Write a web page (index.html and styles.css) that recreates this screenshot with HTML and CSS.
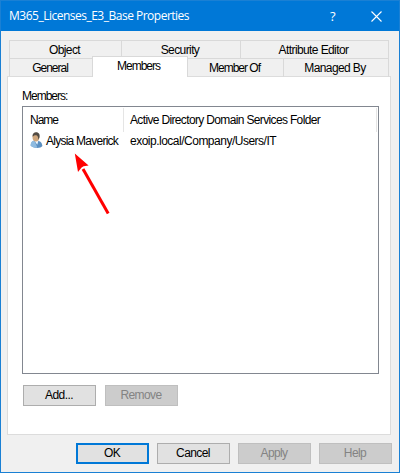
FILE: index.html
```html
<!DOCTYPE html>
<html lang="en">
<head>
  <meta charset="UTF-8">
  <meta name="viewport" content="width=device-width, initial-scale=1.0">
  <title>M365_Licenses_E3_Base Properties</title>
  <link rel="stylesheet" href="styles.css">
</head>
<body>
  <div class="window">
    <header class="titlebar">
      <h1>M365_Licenses_E3_Base Properties</h1>
      <span class="help">?</span>
      <svg class="close" width="11" height="11" viewBox="0 0 11 11">
        <path d="M0.5 0.5L10.5 10.5M10.5 0.5L0.5 10.5" stroke="#fff" stroke-width="1.1" fill="none"/>
      </svg>
    </header>

    <main class="content">
      <nav class="tabs tabs-back">
        <a class="tab">Object</a>
        <a class="tab">Security</a>
        <a class="tab">Attribute Editor</a>
      </nav>
      <nav class="tabs tabs-front">
        <a class="tab tight">General</a>
        <a class="tab active tight">Members</a>
        <a class="tab tight">Member Of</a>
        <a class="tab">Managed By</a>
      </nav>

      <section class="panel">
        <div class="label tight">Members:</div>
        <div class="list">
          <div class="list-head">
            <span class="col-name tight">Name</span>
            <span class="col-folder">Active Directory Domain Services Folder</span>
          </div>
          <div class="list-row">
            <span class="user">
              <svg width="14" height="17" viewBox="0 0 14 17">
                <path d="M0.6 13.4C0.8 10.2 2.6 8.6 5.6 8.6C9.6 8.6 12 10.4 12.4 14C10.8 16.6 3.2 16.6 0.6 13.4Z" fill="#5b8fc0"/>
                <path d="M0.6 13.4C0.8 10.4 2.2 8.8 4.4 8.6L7.4 15.8C4.4 16 1.8 15 0.6 13.4Z" fill="#8fbbe0"/>
                <path d="M4.4 8.6L7.2 12.8L8.4 8.8Z" fill="#eef6fc"/>
                <ellipse cx="5.9" cy="5.1" rx="3.4" ry="4.4" fill="#cfa67c"/>
                <path d="M2.6 4.8C2.2 1.8 4 0.3 6.1 0.3C9 0.3 10.2 2.6 9.4 5.8L8.3 7.8C8.4 5.4 7.7 3.7 6.3 3.3C4.9 3 3.5 3.5 2.6 4.8Z" fill="#514b43"/>
              </svg>
              <span class="user-name">Alysia Maverick</span>
            </span>
            <span class="path">exoip.local/Company/Users/IT</span>
          </div>
        </div>
        <div class="panel-buttons">
          <button class="btn">Add...</button>
          <button class="btn tight" disabled>Remove</button>
        </div>
      </section>

      <footer class="dialog-buttons">
        <button class="btn default">OK</button>
        <button class="btn">Cancel</button>
        <button class="btn" disabled>Apply</button>
        <button class="btn" disabled>Help</button>
      </footer>
    </main>

    <svg class="arrow" width="40" height="66" viewBox="0 0 40 66">
      <path d="M9 16L34.2 60.5" stroke="#f00" stroke-width="3"/>
      <path d="M0.8 0.4L14.6 12.6L9.6 13.2L7.6 14.4L4 19Z" fill="#f00"/>
    </svg>
  </div>
</body>
</html>
```
FILE: styles.css
```css
* {
  box-sizing: border-box;
}
body {
  margin: 0;
  font-family: "Liberation Sans", Arial, sans-serif;
  font-size: 12px;
  line-height: 14px;
  letter-spacing: -0.6px;
  white-space: nowrap;
  color: #000;
}
.window {
  position: relative;
  width: 400px; height: 473px;
  border: 1px solid #1a80d4;
  background: #f0f0f0;
}
.titlebar {
  display: flex;
  align-items: center;
  height: 30px;
  padding: 0 17px 0 8px;
  background: #0078d7;
  color: #fff;
}
.titlebar h1 {
  flex: 1;
  margin: 0;
  font-family: "Open Sans", "Noto Sans", sans-serif;
  font-size: 12px;
  font-weight: normal;
  letter-spacing: -0.5px;
}
.help {
  margin-right: 36px;
  font-family: "Open Sans", "Noto Sans", sans-serif;
  font-size: 13px;
}
.content {
  padding: 9px 7px 0 6px;
}
.tabs {
  display: grid;
  height: 18px;
  margin: 0 3px 0 2px;
  border-left: 1px solid #d9d9d9;
}
.tabs-back {
  grid-template-columns: 112px 119px 148px;
}
.tabs-front {
  grid-template-columns: 83px 95px 96px 105px;
}
.tab {
  padding: 2px 2px 0 0;
  border-top: 1px solid #d9d9d9;
  border-right: 1px solid #d9d9d9;
  text-align: center;
}
.tab.active {
  z-index: 1;
  height: 21px;
  margin: -2px 0 0 -1px;
  padding-right: 3px;
  border-left: 1px solid #d9d9d9;
  background: #fff;
}
.panel {
  width: 384px; height: 359px;
  padding: 12px 11px 0 14px;
  border: 1px solid #dcdcdc;
  background: #fff;
}
.list {
  width: 357px; height: 268px;
  margin-top: 3px;
  padding: 1px;
  border: 1px solid #828790;
}
.list-head {
  display: flex;
  height: 24px;
  line-height: 24px;
  border-right: 1px solid #e5e5e5;
}
.col-name {
  width: 100px;
  padding-left: 6px;
  border-right: 1px solid #e5e5e5;
}
.col-folder {
  padding-left: 6px;
  letter-spacing: -0.65px;
}
.list-row {
  display: flex;
  align-items: center;
  height: 17px;
}
.user {
  display: flex;
  align-items: center;
  gap: 2px;
  width: 106px;
  padding-left: 6px;
}
.user-name {
  letter-spacing: -0.75px;
}
.path {
  letter-spacing: -0.5px;
}
.tight {
  letter-spacing: -1px;
}
.panel-buttons {
  display: flex;
  gap: 9px;
  margin: 11px 0 0 1px;
}
.btn {
  width: 73px; height: 21px;
  padding: 0 1px 0 0;
  border: 1px solid #adadad;
  background: #e1e1e1;
  color: #000;
  font: inherit;
  letter-spacing: -0.6px;
  line-height: 19px;
}
.btn.default {
  border: 2px solid #0078d7;
  line-height: 17px;
}
.btn:disabled {
  border-color: #bfbfbf;
  background: #ccc;
  color: #838383;
}
.dialog-buttons {
  display: flex;
  justify-content: flex-end;
  gap: 8px;
  padding-top: 8px;
}
.arrow {
  position: absolute;
  top: 152px; left: 73px;
}
```
